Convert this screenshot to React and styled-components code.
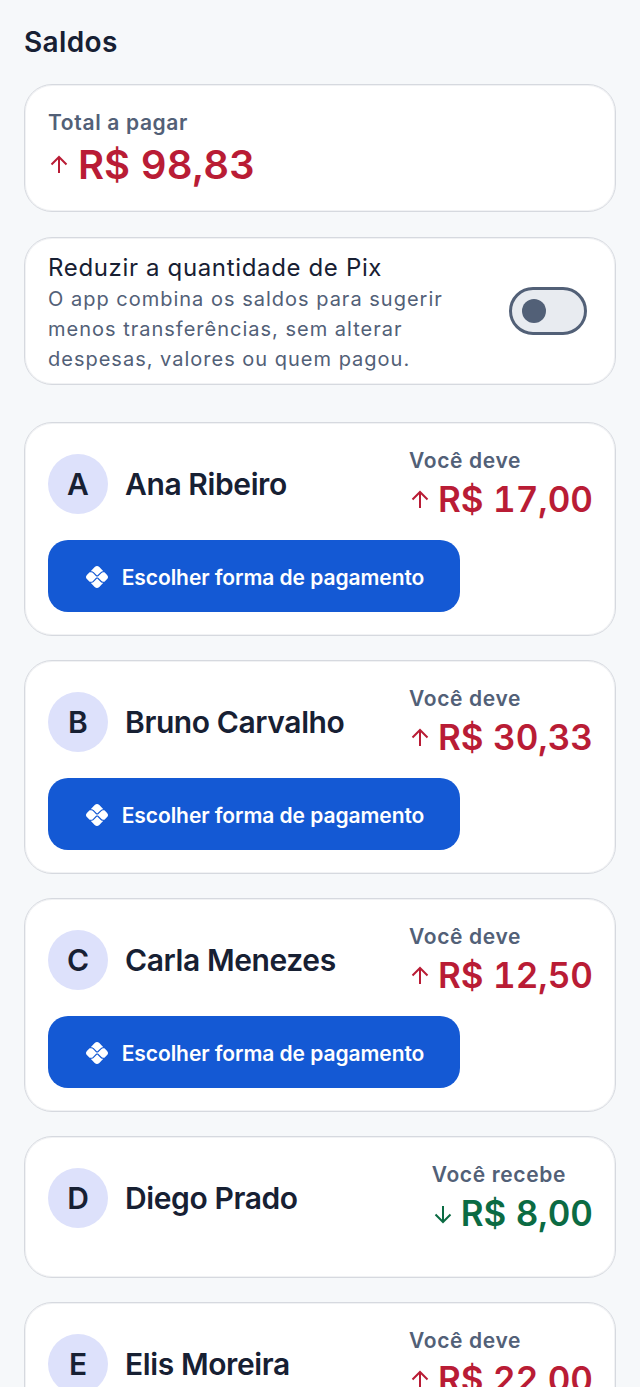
import React from 'react';
import styled, { createGlobalStyle } from 'styled-components';
import { MdPix } from 'react-icons/md';

const GlobalStyle = createGlobalStyle`
    html, body {
        margin: 0;
        background-color: #f6f8fa;
        font-family: "Inter", "Liberation Sans", sans-serif;
    }
    * {
        box-sizing: border-box;
    }
`;

const Page = styled.main`
    display: flex;
    flex-direction: column;
    height: 1387px;
    overflow: hidden;
    padding: 24px 24px 0;
`;

const Title = styled.h1`
    margin: 0 0 24px;
    height: 36px;
    color: #172033;
    font-size: 28px;
    font-weight: 600;
    line-height: 36px;
    letter-spacing: 0.35px;
`;

const Card = styled.section`
    flex: none;
    background-color: #ffffff;
    border: 1px solid #d6d9df;
    border-radius: 28px;
    box-shadow: inset 0 0 0 1px #f1f2f4;
`;

const TotalCard = styled(Card)`
    height: 128px;
    padding: 23px;
    margin-bottom: 25px;
`;

const Label = styled.div`
    padding-top: 1px;
    color: #526077;
    font-size: 21px;
    font-weight: 600;
    line-height: 28px;
    letter-spacing: 0.65px;
`;

const Amount = styled.div`
    display: flex;
    align-items: center;
    gap: ${props => (props.$big ? '8px' : '7px')};
    color: ${props => (props.$receive ? '#0b6b43' : '#b91c35')};
    font-size: ${props => (props.$big ? '40px' : '35px')};
    font-weight: 600;
    font-variant-numeric: tabular-nums;
    line-height: ${props => (props.$big ? '55px' : '49px')};
`;

const Arrow = ({ down }) => (
    <svg width="22" height="22" viewBox="0 0 22 22" fill="none" stroke="currentColor" strokeWidth="2">
        {down ? <path d="M11 3v16M3.5 11.5 11 19l7.5-7.5" /> : <path d="M11 19V3M3.5 10.5 11 3l7.5 7.5" />}
    </svg>
);

const ToggleCard = styled(Card)`
    display: flex;
    align-items: center;
    justify-content: space-between;
    height: 148px;
    padding: 0 28px 0 23px;
    margin-bottom: 37px;
`;

const ToggleBody = styled.div`
    padding-top: 4px;
`;

const ToggleTitle = styled.div`
    margin-bottom: 1px;
    color: #172033;
    font-size: 24px;
    line-height: 30px;
    letter-spacing: 0.65px;
`;

const ToggleText = styled.p`
    margin: 0;
    width: 425px;
    color: #526077;
    font-size: 20px;
    line-height: 30px;
    letter-spacing: 1px;
`;

const Switch = styled.div`
    display: flex;
    align-items: center;
    flex: none;
    width: 78px;
    height: 48px;
    padding-left: 10px;
    background-color: #e8ebf0;
    border: 3px solid #526077;
    border-radius: 24px;
`;

const Knob = styled.div`
    width: 24px;
    height: 24px;
    background-color: #526077;
    border-radius: 50%;
`;

const PersonCard = styled(Card)`
    display: flex;
    flex-direction: column;
    gap: 16px;
    height: ${props => (props.$withButton ? '214px' : '142px')};
    padding: 23px 22px 0 23px;
    margin-bottom: 24px;
`;

const PersonRow = styled.div`
    display: flex;
    align-items: center;
    justify-content: space-between;
`;

const Person = styled.div`
    display: flex;
    align-items: center;
    gap: 17px;
    padding-bottom: 2px;
`;

const Avatar = styled.div`
    display: flex;
    align-items: center;
    justify-content: center;
    width: 60px;
    height: 60px;
    background-color: #dde1fb;
    border-radius: 50%;
    color: #172033;
    font-size: 30px;
    font-weight: 600;
`;

const Name = styled.div`
    color: #172033;
    font-size: 30px;
    font-weight: 600;
    line-height: 38px;
    letter-spacing: -0.4px;
`;

const Balance = styled.div`
    display: flex;
    flex-direction: column;
    align-items: flex-start;
`;

const PayButton = styled.button`
    display: flex;
    align-items: center;
    justify-content: center;
    gap: 12px;
    width: 412px;
    height: 72px;
    padding: 2px 0 0;
    background-color: #1459d4;
    border: none;
    border-radius: 20px;
    color: #ffffff;
    font-family: inherit;
    font-size: 21px;
    font-weight: 600;
    letter-spacing: -0.07px;
    cursor: pointer;
`;

const people = [
    { initial: 'A', name: 'Ana Ribeiro', amount: 'R$ 17,00' },
    { initial: 'B', name: 'Bruno Carvalho', amount: 'R$ 30,33' },
    { initial: 'C', name: 'Carla Menezes', amount: 'R$ 12,50' },
    { initial: 'D', name: 'Diego Prado', amount: 'R$ 8,00', receive: true },
    { initial: 'E', name: 'Elis Moreira', amount: 'R$ 22,00' },
];

const App = () => {
    return (
        <>
            <GlobalStyle />
            <Page>
                <Title>Saldos</Title>
                <TotalCard>
                    <Label>Total a pagar</Label>
                    <Amount $big>
                        <Arrow />
                        R$ 98,83
                    </Amount>
                </TotalCard>
                <ToggleCard>
                    <ToggleBody>
                        <ToggleTitle>Reduzir a quantidade de Pix</ToggleTitle>
                        <ToggleText>
                            O app combina os saldos para sugerir menos transferências, sem alterar despesas, valores ou quem pagou.
                        </ToggleText>
                    </ToggleBody>
                    <Switch><Knob /></Switch>
                </ToggleCard>
                {people.map(person => (
                    <PersonCard key={person.initial} $withButton={!person.receive}>
                        <PersonRow>
                            <Person>
                                <Avatar>{person.initial}</Avatar>
                                <Name>{person.name}</Name>
                            </Person>
                            <Balance>
                                <Label>{person.receive ? 'Você recebe' : 'Você deve'}</Label>
                                <Amount $receive={person.receive}>
                                    <Arrow down={person.receive} />
                                    {person.amount}
                                </Amount>
                            </Balance>
                        </PersonRow>
                        {!person.receive && (
                            <PayButton>
                                <MdPix size={26} />
                                Escolher forma de pagamento
                            </PayButton>
                        )}
                    </PersonCard>
                ))}
            </Page>
        </>
    );
};

export default App;
